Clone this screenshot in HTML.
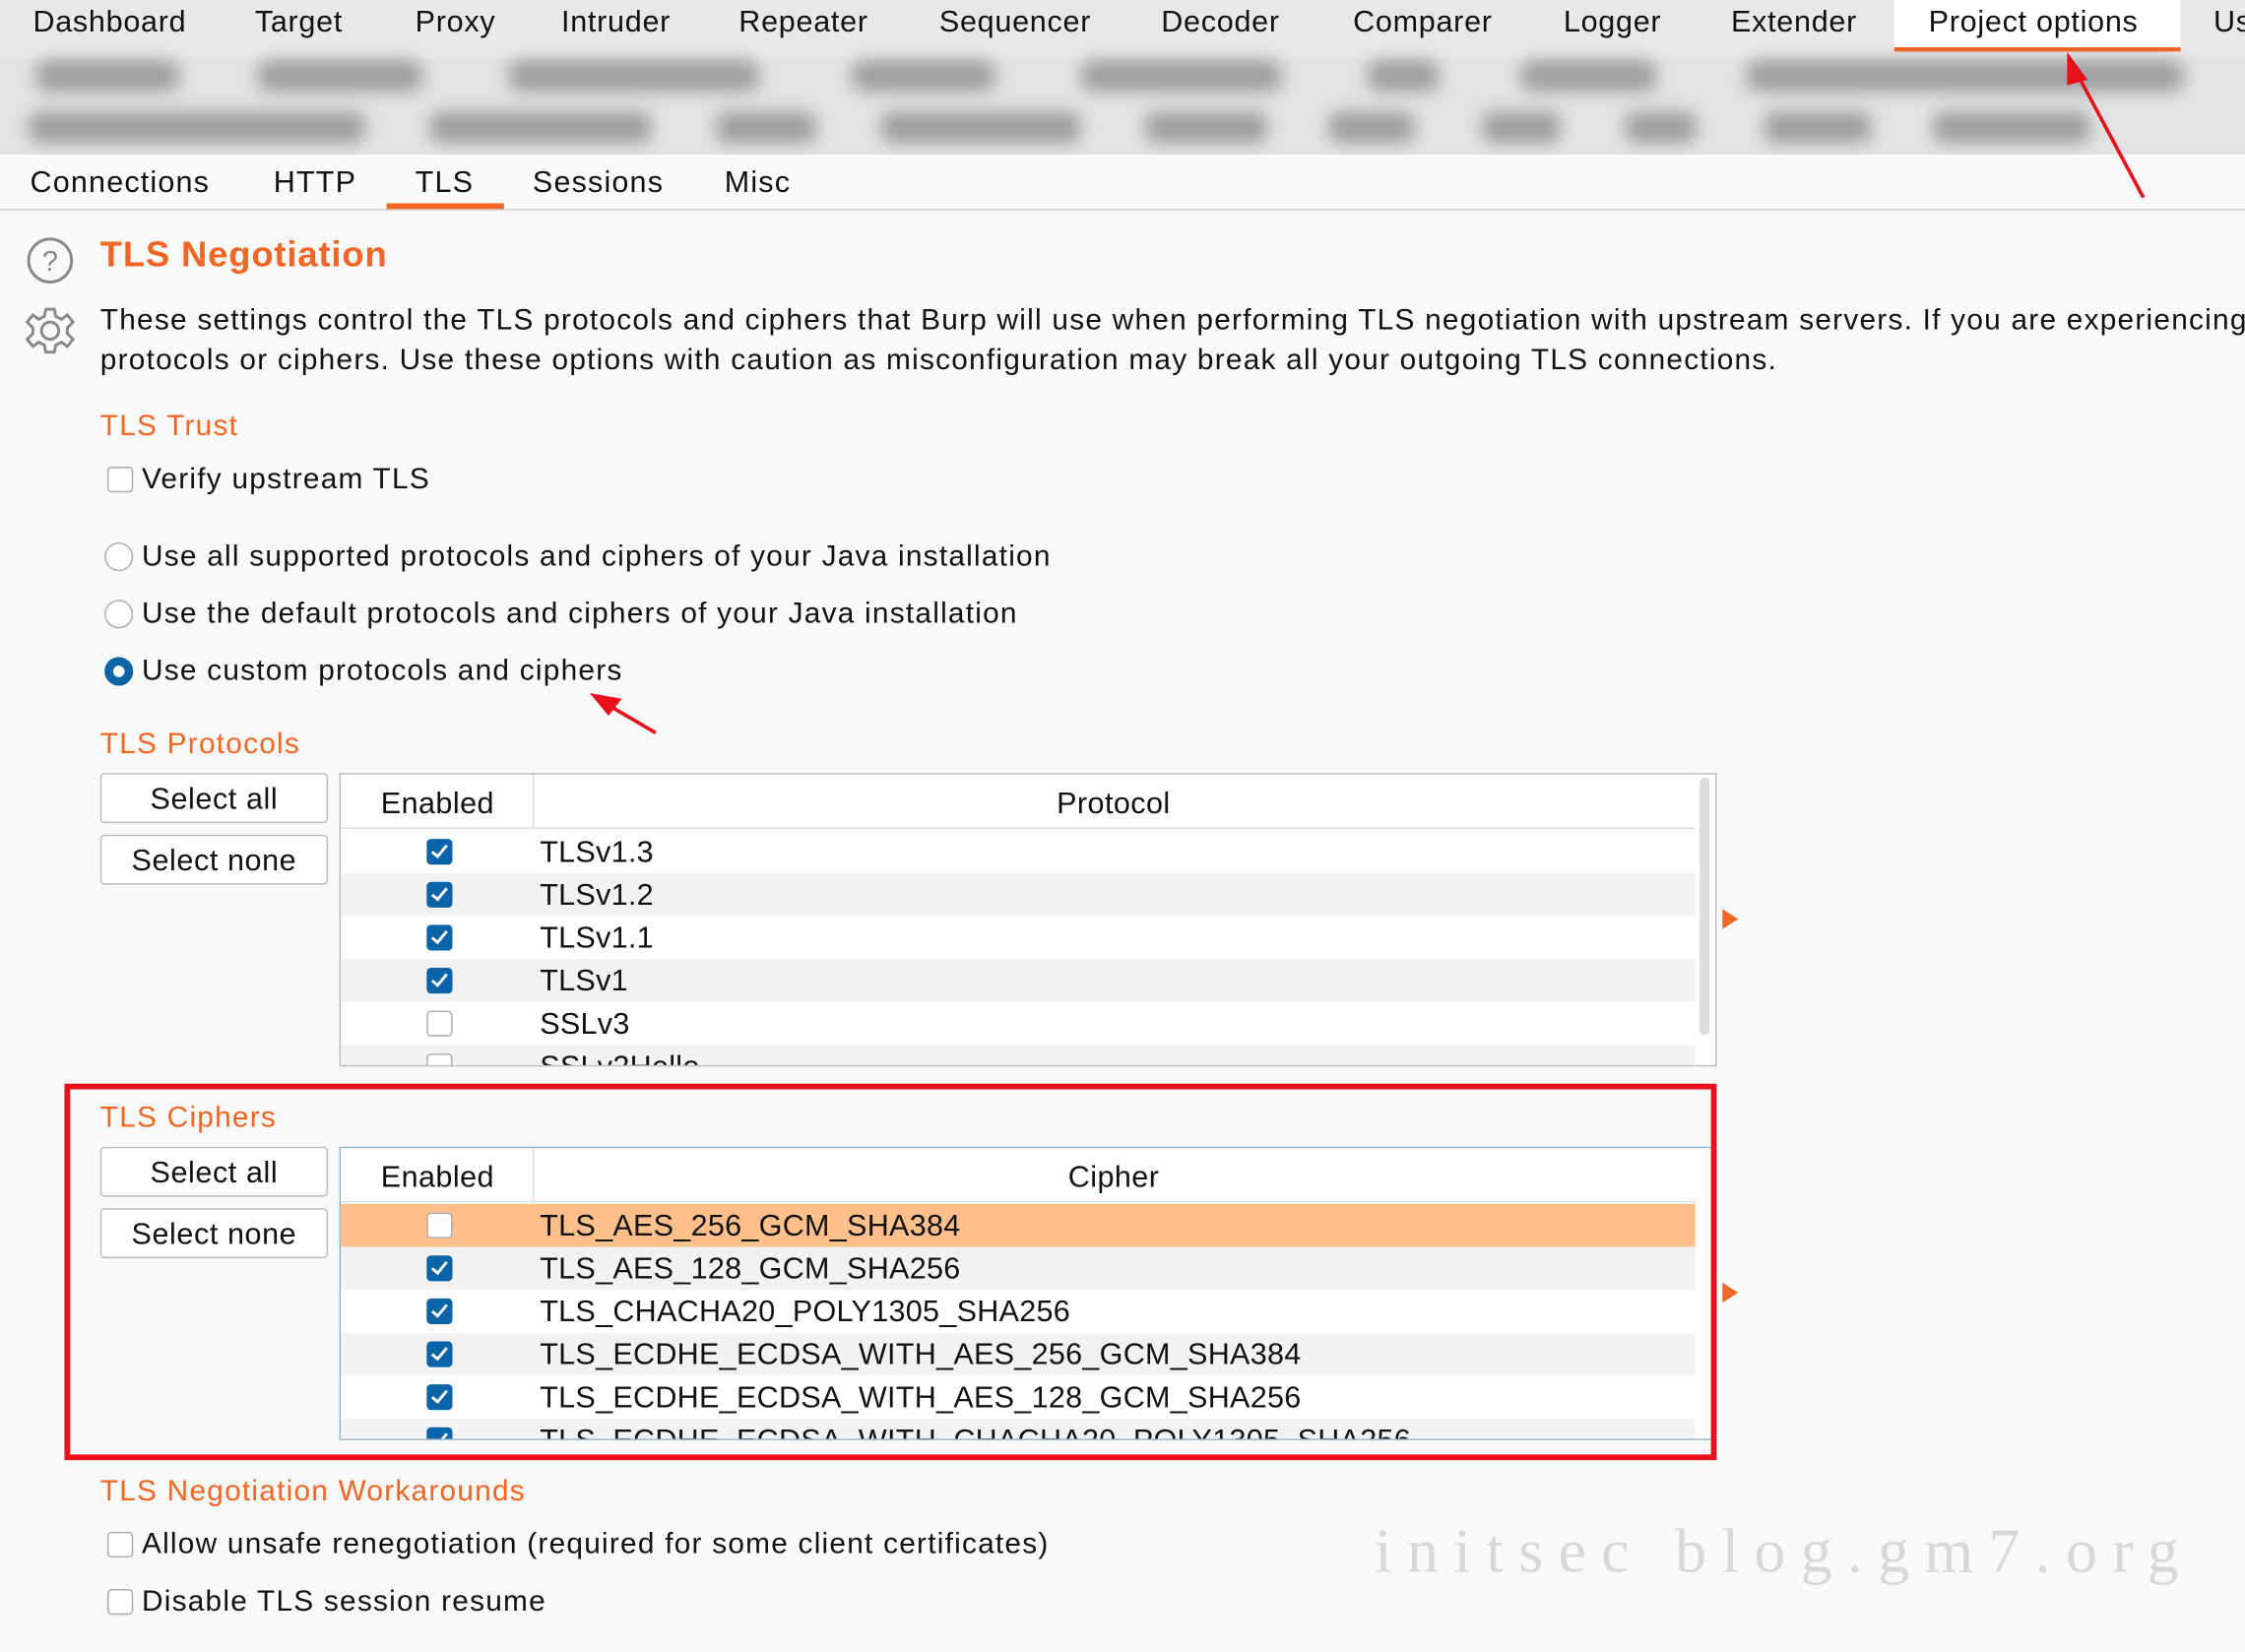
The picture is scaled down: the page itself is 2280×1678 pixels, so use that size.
<!DOCTYPE html>
<html><head><meta charset="utf-8"><style>
html,body{margin:0;padding:0;width:2280px;height:1678px;overflow:hidden;background:#f9f9f9}
#w{position:absolute;left:0;top:0;width:1568px;height:1154px;transform:scale(1.45408);transform-origin:0 0;font-family:"Liberation Sans",Arial,sans-serif;color:#111;background:#f9f9f9}
.a{position:absolute;white-space:nowrap}
.tab{position:absolute;top:4px;font-size:21px;letter-spacing:0.5px}
.sub{position:absolute;top:116px;font-size:21px;letter-spacing:0.8px}
.t{letter-spacing:0.85px}
.or{color:#f26522}
.cb{position:absolute;width:16px;height:16px;border:1.3px solid #aaa;border-radius:3px;background:#fff}
.cbc{position:absolute;width:18px;height:18px;border-radius:3px;background:#0b64a8}
.cbc:after{content:"";position:absolute;left:6px;top:2px;width:4px;height:9px;border:solid #fff;border-width:0 2.5px 2.5px 0;transform:rotate(40deg)}
.rad{position:absolute;width:18px;height:18px;border:1.3px solid #aaa;border-radius:50%;background:#fff}
.btn{position:absolute;left:70px;width:157px;height:33px;border:1px solid #bbb;border-radius:3px;background:#fff;font-size:21px;text-align:center;line-height:35px;letter-spacing:0.4px}
.tbl{position:absolute;left:237px;width:960px;border:1.5px solid #bbb;background:#fff;overflow:hidden}
.hd{position:absolute;left:0;top:0;width:946px;height:37px;border-bottom:1.5px solid #ddd;font-size:21px;letter-spacing:0.3px}
.row{position:absolute;left:0;width:946px;height:30px;font-size:21px;letter-spacing:0.2px}
.row span{position:absolute;left:139px;top:4px}
.blob{position:absolute;height:22px;background:#666;filter:blur(6px);border-radius:8px;opacity:.55}
</style></head><body><div id="w">
<div class="a" style="left:0;top:0;width:1568px;height:40px;background:#e8e8e8"></div>
<div class="a" style="left:1323px;top:0;width:200px;height:33px;background:#fff;border-bottom:3px solid #f26522"></div>
<div class="tab" style="left:23px">Dashboard</div><div class="tab" style="left:178px">Target</div><div class="tab" style="left:290px">Proxy</div><div class="tab" style="left:392px">Intruder</div><div class="tab" style="left:516px">Repeater</div><div class="tab" style="left:656px">Sequencer</div><div class="tab" style="left:811px">Decoder</div><div class="tab" style="left:945px">Comparer</div><div class="tab" style="left:1092px">Logger</div><div class="tab" style="left:1209px">Extender</div><div class="tab" style="left:1347px">Project options</div><div class="tab" style="left:1546px">Us</div>
<div class="a" style="left:0;top:40px;width:1568px;height:68px;background:#e3e3e3"></div>
<div class="blob" style="left:25px;top:42px;width:100px"></div><div class="blob" style="left:180px;top:42px;width:115px"></div><div class="blob" style="left:355px;top:42px;width:175px"></div><div class="blob" style="left:595px;top:42px;width:100px"></div><div class="blob" style="left:755px;top:42px;width:140px"></div><div class="blob" style="left:955px;top:42px;width:50px"></div><div class="blob" style="left:1062px;top:42px;width:95px"></div><div class="blob" style="left:1220px;top:42px;width:305px"></div>
<div class="blob" style="left:20px;top:78px;width:235px"></div><div class="blob" style="left:300px;top:78px;width:155px"></div><div class="blob" style="left:500px;top:78px;width:70px"></div><div class="blob" style="left:615px;top:78px;width:140px"></div><div class="blob" style="left:800px;top:78px;width:85px"></div><div class="blob" style="left:928px;top:78px;width:60px"></div><div class="blob" style="left:1035px;top:78px;width:55px"></div><div class="blob" style="left:1135px;top:78px;width:50px"></div><div class="blob" style="left:1232px;top:78px;width:75px"></div><div class="blob" style="left:1350px;top:78px;width:110px"></div>
<div class="a" style="left:0;top:108px;width:1568px;height:38px;background:#fafafa;border-bottom:1.5px solid #ccc"></div>
<div class="sub" style="left:21px">Connections</div><div class="sub" style="left:191px">HTTP</div><div class="sub" style="left:290px">TLS</div><div class="sub" style="left:372px">Sessions</div><div class="sub" style="left:506px">Misc</div>
<div class="a" style="left:270px;top:142px;width:82px;height:4px;background:#f26522"></div>
<svg class="a" style="left:16px;top:164px" width="40" height="90" viewBox="0 0 40 90"><circle cx="19" cy="18" r="15" fill="none" stroke="#888" stroke-width="2"/><text x="19" y="25" font-size="20" text-anchor="middle" fill="#888" font-family="Liberation Sans">?</text>
<g transform="translate(19,67)" fill="none" stroke="#888" stroke-width="2"><circle r="6"/><path d="M-3,-15 L3,-15 L4,-10 L8,-8 L12,-11 L16,-6 L12,-2 L12,2 L16,6 L12,11 L8,8 L4,10 L3,15 L-3,15 L-4,10 L-8,8 L-12,11 L-16,6 L-12,2 L-12,-2 L-16,-6 L-12,-11 L-8,-8 L-4,-10Z"/></g></svg>
<div class="a or" style="left:70px;top:164px;font-size:25px;font-weight:bold;letter-spacing:0.6px">TLS Negotiation</div>
<div class="a t" style="left:70px;top:210px;font-size:20.5px;line-height:27.5px">These settings control the TLS protocols and ciphers that Burp will use when performing TLS negotiation with upstream servers. If you are experiencing p<br>protocols or ciphers. Use these options with caution as misconfiguration may break all your outgoing TLS connections.</div>
<div class="a or t" style="left:70px;top:286px;font-size:20.5px">TLS Trust</div>
<div class="cb" style="left:75px;top:326px"></div><div class="a t" style="left:99px;top:323px;font-size:20.5px">Verify upstream TLS</div>
<div class="rad" style="left:73px;top:379px"></div><div class="a t" style="left:99px;top:377px;font-size:20.5px">Use all supported protocols and ciphers of your Java installation</div>
<div class="rad" style="left:73px;top:419px"></div><div class="a t" style="left:99px;top:417px;font-size:20.5px">Use the default protocols and ciphers of your Java installation</div>
<div class="rad" style="left:73px;top:459px;border:6px solid #0b64a8;width:8px;height:8px"></div><div class="a t" style="left:99px;top:457px;font-size:20.5px">Use custom protocols and ciphers</div>
<div class="a or t" style="left:70px;top:508px;font-size:20.5px">TLS Protocols</div>
<div class="btn" style="top:540px">Select all</div><div class="btn" style="top:583px">Select none</div>
<div class="tbl" style="top:540px;height:203px">
<div class="hd"><span class="a" style="left:28px;top:9px">Enabled</span><span class="a" style="left:134px;top:0;height:37px;border-left:1.5px solid #ddd"></span><span class="a" style="left:500px;top:9px">Protocol</span></div>
<div class="row" style="top:39px"><div class="cbc" style="left:60px;top:6px"></div><span>TLSv1.3</span></div>
<div class="row" style="top:69px;background:#f2f2f2"><div class="cbc" style="left:60px;top:6px"></div><span>TLSv1.2</span></div>
<div class="row" style="top:99px"><div class="cbc" style="left:60px;top:6px"></div><span>TLSv1.1</span></div>
<div class="row" style="top:129px;background:#f2f2f2"><div class="cbc" style="left:60px;top:6px"></div><span>TLSv1</span></div>
<div class="row" style="top:159px"><div class="cb" style="left:60px;top:6px"></div><span>SSLv3</span></div>
<div class="row" style="top:189px;background:#f2f2f2"><div class="cb" style="left:60px;top:6px"></div><span>SSLv2Hello</span></div>
<div class="a" style="left:949px;top:2px;width:7px;height:180px;background:#ddd;border-radius:4px"></div>
</div>
<div class="a" style="left:1203px;top:635px;border-left:11px solid #f26522;border-top:7px solid transparent;border-bottom:7px solid transparent"></div>
<div class="a or t" style="left:70px;top:769px;font-size:20.5px">TLS Ciphers</div>
<div class="btn" style="top:801px">Select all</div><div class="btn" style="top:844px">Select none</div>
<div class="tbl" style="top:801px;height:203px;border-color:#8fb0cf">
<div class="hd"><span class="a" style="left:28px;top:9px">Enabled</span><span class="a" style="left:134px;top:0;height:37px;border-left:1.5px solid #ddd"></span><span class="a" style="left:508px;top:9px">Cipher</span></div>
<div class="row" style="top:39px;background:#ffc08c"><div class="cb" style="left:60px;top:6px"></div><span>TLS_AES_256_GCM_SHA384</span></div>
<div class="row" style="top:69px;background:#f2f2f2"><div class="cbc" style="left:60px;top:6px"></div><span>TLS_AES_128_GCM_SHA256</span></div>
<div class="row" style="top:99px"><div class="cbc" style="left:60px;top:6px"></div><span>TLS_CHACHA20_POLY1305_SHA256</span></div>
<div class="row" style="top:129px;background:#f2f2f2"><div class="cbc" style="left:60px;top:6px"></div><span>TLS_ECDHE_ECDSA_WITH_AES_256_GCM_SHA384</span></div>
<div class="row" style="top:159px"><div class="cbc" style="left:60px;top:6px"></div><span>TLS_ECDHE_ECDSA_WITH_AES_128_GCM_SHA256</span></div>
<div class="row" style="top:189px;background:#f2f2f2"><div class="cbc" style="left:60px;top:6px"></div><span>TLS_ECDHE_ECDSA_WITH_CHACHA20_POLY1305_SHA256</span></div>
</div>
<div class="a" style="left:1203px;top:896px;border-left:11px solid #f26522;border-top:7px solid transparent;border-bottom:7px solid transparent"></div>
<div class="a" style="left:45px;top:757px;width:1146px;height:255px;border:4px solid #e8101a"></div>
<div class="a or t" style="left:70px;top:1030px;font-size:20.5px">TLS Negotiation Workarounds</div>
<div class="cb" style="left:75px;top:1070px"></div><div class="a t" style="left:99px;top:1067px;font-size:20.5px">Allow unsafe renegotiation (required for some client certificates)</div>
<div class="cb" style="left:75px;top:1110px"></div><div class="a t" style="left:99px;top:1107px;font-size:20.5px">Disable TLS session resume</div>
<div class="a" style="left:960px;top:1058px;font-size:44px;font-family:'Liberation Serif',serif;color:#d8d8d8;letter-spacing:10.5px">initsec blog.gm7.org</div>
<svg class="a" style="left:0;top:0" width="1568" height="1154"><g stroke="#e8101a" stroke-width="2.5" fill="#e8101a"><line x1="1497" y1="138" x2="1450" y2="50"/><polygon points="1445,40 1456,55 1445,58"/><line x1="458" y1="512" x2="424" y2="492"/><polygon points="415,486 432,489 425,498"/></g></svg>
</div></body></html>
